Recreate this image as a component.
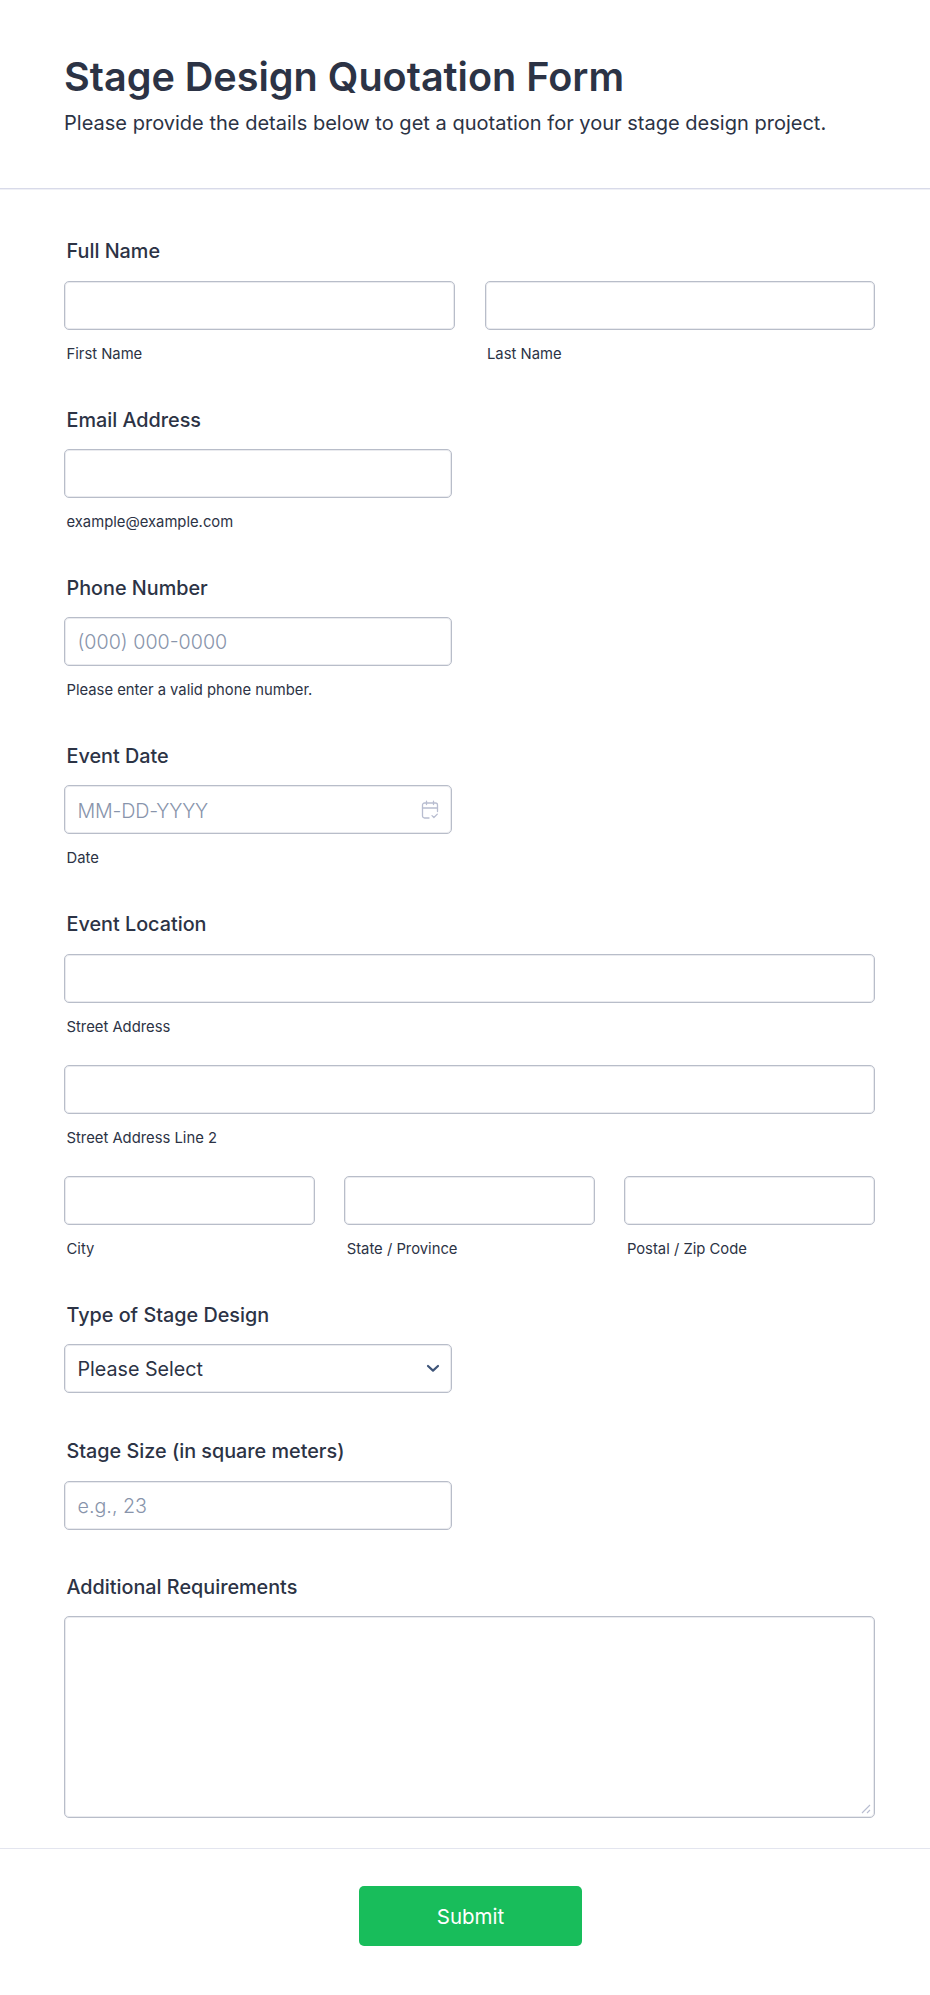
<div class="page">
  <header class="head">
    <h1>Stage Design Quotation Form</h1>
    <p>Please provide the details below to get a quotation for your stage design project.</p>
  </header>

  <form class="form">
    <section class="field first">
      <div class="label">Full Name</div>
      <div class="row two">
        <div><div class="box"></div><div class="hint">First Name</div></div>
        <div><div class="box"></div><div class="hint">Last Name</div></div>
      </div>
    </section>

    <section class="field">
      <div class="label">Email Address</div>
      <div class="box narrow"></div>
      <div class="hint">example@example.com</div>
    </section>

    <section class="field">
      <div class="label">Phone Number</div>
      <div class="box narrow ph">(000) 000-0000</div>
      <div class="hint">Please enter a valid phone number.</div>
    </section>

    <section class="field">
      <div class="label">Event Date</div>
      <div class="box narrow ph between">
        <span class="date">MM-DD-YYYY</span>
        <svg class="cal" width="18" height="20" viewBox="0 0 18 20" fill="none" stroke="#b8bdd0" stroke-width="1.3" stroke-linecap="round" stroke-linejoin="round">
          <path d="M8 18H3.5a2 2 0 0 1-2-2V5a2 2 0 0 1 2-2h11a2 2 0 0 1 2 2v6.5" />
          <path d="M1.5 8h15M5.5 1.2v3.4M12.5 1.2v3.4" />
          <path d="M11 15.6l1.9 1.9 3.4-3.4" />
        </svg>
      </div>
      <div class="hint">Date</div>
    </section>

    <section class="field loc">
      <div class="label">Event Location</div>
      <div class="box"></div>
      <div class="hint">Street Address</div>
      <div class="box gap"></div>
      <div class="hint">Street Address Line 2</div>
      <div class="row three gap">
        <div><div class="box"></div><div class="hint">City</div></div>
        <div><div class="box"></div><div class="hint">State / Province</div></div>
        <div><div class="box"></div><div class="hint">Postal / Zip Code</div></div>
      </div>
    </section>

    <section class="field solo">
      <div class="label">Type of Stage Design</div>
      <div class="box narrow between sel">
        <span>Please Select</span>
        <svg class="chev" width="14" height="9" viewBox="0 0 14 9" fill="none" stroke="#3e5478" stroke-width="2.2" stroke-linecap="round" stroke-linejoin="round">
          <path d="M2 2l5 4.6L12 2" />
        </svg>
      </div>
    </section>

    <section class="field solo2">
      <div class="label">Stage Size (in square meters)</div>
      <div class="box narrow ph">e.g., 23</div>
    </section>

    <section class="field last">
      <div class="label">Additional Requirements</div>
      <div class="box area">
        <svg class="grip" width="10" height="10" viewBox="0 0 10 10" stroke="#b8bdd0" stroke-width="1.1" fill="none">
          <path d="M1 9l8-8M6 9l3-3" />
        </svg>
      </div>
    </section>
  </form>

  <footer class="foot">
    <button type="button">Submit</button>
  </footer>
</div>

<style>
  :global(body) {
    background: #fff;
    margin: 0;
  }
  .page {
    width: 930px;
    height: 1995px;
    font-family: Inter, "Liberation Sans", sans-serif;
    color: #2c3345;
    box-sizing: border-box;
    overflow: hidden;
  }
  .head {
    padding: 52px 64px 0;
    height: 189px;
    box-sizing: border-box;
    border-bottom: 1px solid #d8dae9;
    box-shadow: 0 1px 0 rgba(216, 218, 233, 0.4);
  }
  h1 {
    margin: 0;
    font-size: 39.6px;
    line-height: 50px;
    font-weight: 600;
  }
  .head p {
    margin: 7px 0 0;
    font-size: 20.05px;
    line-height: 28px;
    font-weight: 400;
  }
  .form {
    padding: 50px 55px 0 64px;
  }
  .field {
    margin-bottom: 44px;
  }
  .first .label,
  .loc .label,
  .last .label {
    margin-bottom: 18px;
  }
  .solo {
    margin-bottom: 46px;
  }
  .solo2 {
    margin-bottom: 45px;
  }
  .solo2 .label {
    margin-bottom: 18px;
  }
  .last .label {
    margin-bottom: 17px;
  }
  .label {
    font-size: 19.8px;
    font-weight: 500;
    line-height: 24px;
    padding-left: 2.5px;
    margin-bottom: 17px;
  }
  .box {
    height: 49px;
    box-sizing: border-box;
    border: 1px solid #b8bdc9;
    border-radius: 5px;
    background: #fff;
    box-shadow: inset 0 0 0 1px rgba(184, 189, 201, 0.3);
  }
  .narrow {
    width: 388px;
  }
  .ph {
    color: #8894ab;
    font-size: 19.7px;
    font-weight: 300;
    line-height: 49px;
    padding: 0 12.5px;
  }
  .date {
    letter-spacing: -0.2px;
    line-height: 24px;
    padding-top: 2px;
  }
  .between {
    display: flex;
    align-items: center;
    justify-content: space-between;
  }
  .sel {
    font-size: 19.7px;
    padding: 0 12.5px;
  }
  .chev {
    margin-right: -1px;
  }
  .hint {
    font-size: 14.8px;
    line-height: 20px;
    padding-left: 2.5px;
    margin-top: 14px;
  }
  .gap {
    margin-top: 28px;
  }
  .row {
    display: grid;
  }
  .two {
    grid-template-columns: 390.5px 390.5px;
    column-gap: 30px;
  }
  .three {
    grid-template-columns: 250.6px 250.6px 250.6px;
    column-gap: 29.6px;
  }
  .area {
    height: 202px;
    position: relative;
  }
  .grip {
    position: absolute;
    right: 3px;
    bottom: 3px;
  }
  .last {
    margin-bottom: 0;
  }
  .foot {
    margin-top: 30px;
    border-top: 1px solid #e3e5ef;
    padding: 37px 0 0 11px;
    display: flex;
    justify-content: center;
  }
  button {
    width: 223px;
    height: 60px;
    border: 0;
    border-radius: 5px;
    background: #18bd5b;
    color: #fff;
    font-family: inherit;
    font-size: 20.5px;
    font-weight: 400;
  }
</style>
